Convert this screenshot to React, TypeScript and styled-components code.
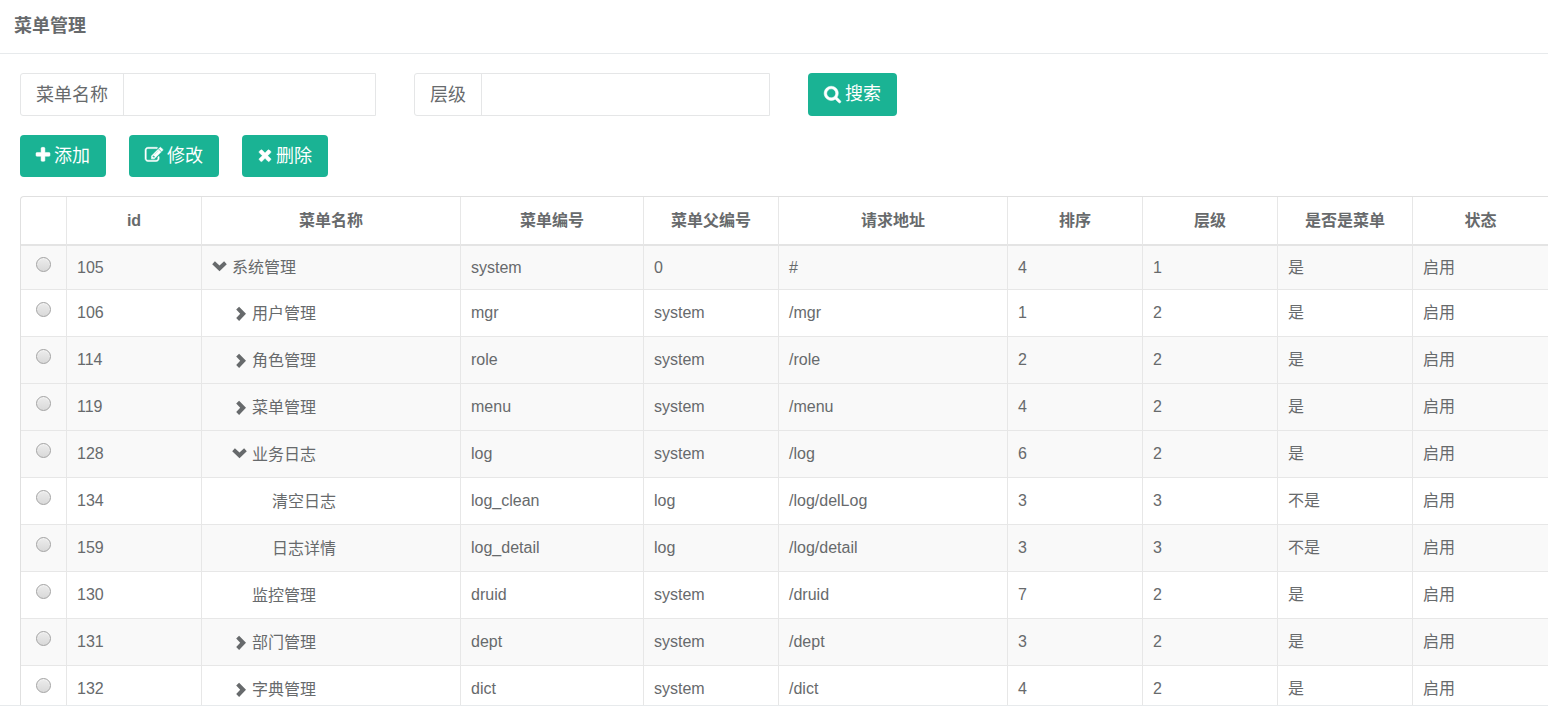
import React, { useState } from 'react';
import styled, { createGlobalStyle } from 'styled-components';

const GlobalStyle = createGlobalStyle`
  *, *::before, *::after { box-sizing: border-box; }
  body {
    margin: 0;
    overflow: hidden;
    background: #fff;
    color: #676a6c;
    font-family: "Liberation Sans", "Noto Sans CJK SC", sans-serif;
    font-size: 16px;
    line-height: 24px;
  }
`;

const Page = styled.div`
  height: 100vh;
  padding-bottom: 3px;
`;

const Panel = styled.main`
  display: flex;
  flex-direction: column;
  height: 100%;
  overflow: hidden;
  border-bottom: 1px solid #e7eaec;
`;

const TitleBar = styled.header`
  flex: none;
  padding: 13px 14px 14px;
  border-bottom: 1px solid #e7eaec;
`;

const Title = styled.h1`
  margin: 0;
  font-size: 18px;
  line-height: 26px;
  font-weight: 700;
`;

const Content = styled.div`
  flex: 1;
  min-height: 0;
  padding: 19px 0 0 20px;
`;

const SearchRow = styled.form`
  display: flex;
  gap: 38px;
  margin-bottom: 19px;
`;

const Field = styled.div`
  display: flex;
  flex: 0 1 356px;
  height: 43px;
  border: 1px solid #e5e6e7;
  border-radius: 3px 0 0 3px;
`;

const FieldLabel = styled.label`
  flex: none;
  padding: 8px 15px 6px;
  border-right: 1px solid #e5e6e7;
  font-size: 18px;
  line-height: 27px;
`;

const FieldInput = styled.input`
  flex: 1;
  min-width: 0;
  padding: 6px 12px;
  border: 0;
  outline: 0;
  background: transparent;
  color: inherit;
  font: inherit;
`;

const ActionRow = styled.div`
  display: flex;
  gap: 23px;
  margin-bottom: 19px;
`;

const Button = styled.button`
  display: flex;
  align-items: center;
  gap: 4px;
  height: 42px;
  padding: 0 16px;
  border: 0;
  border-radius: 4px;
  background: #1ab394;
  color: #fff;
  font-family: inherit;
  font-size: 18px;
  line-height: 27px;
  white-space: nowrap;
`;

const SearchButton = styled(Button)`
  height: 43px;
`;

const ButtonIcon = styled.svg<{ $width: number }>`
  flex: none;
  width: ${(p) => p.$width}px;
  height: 18px;
  margin-bottom: 2px;
  overflow: visible;
  fill: currentColor;
  stroke: currentColor;
  stroke-width: 50;
`;

const TableFrame = styled.div`
  border: solid #e0e0e0;
  border-width: 1px 0 0 1px;
  border-radius: 4px 0 0 0;
  overflow: hidden;
`;

const Table = styled.table`
  width: 100%;
  table-layout: fixed;
  border-collapse: separate;
  border-spacing: 0;
`;

const Col = styled.col<{ $width: number }>`
  width: ${(p) => p.$width}px;
`;

const HeadCell = styled.th`
  height: 49px;
  padding: 0 10px;
  border-bottom: 2px solid #e4e4e4;
  font-weight: 700;
  text-align: center;
  & + & { border-left: 1px solid #e7e7e7; }
`;

const Cell = styled.td`
  padding: 11px 10px 9px;
  border-bottom: 1px solid #e7e7e7;
  vertical-align: top;
  white-space: nowrap;
  & + & { border-left: 1px solid #e7e7e7; }
`;

const RadioCell = styled.td`
  padding: 12px 10px 9px;
  border-bottom: 1px solid #e7e7e7;
  line-height: 0;
  text-align: center;
  vertical-align: top;
  & + ${Cell} { border-left: 1px solid #e7e7e7; }
`;

const Row = styled.tr<{ $shaded: boolean }>`
  background: ${(p) => (p.$shaded ? '#f9f9f9' : '#fff')};

  /* The thick header rule takes one pixel of the first row's padding. */
  &:first-child ${Cell} { padding-top: 10px; }
  &:first-child ${RadioCell} { padding-top: 11px; }
`;

const Radio = styled.input`
  appearance: none;
  width: 15px;
  height: 15px;
  margin: 0;
  border: 1px solid #a3a3a3;
  border-radius: 50%;
  background: linear-gradient(#ececec, #d9d9d9);
  box-shadow: inset 0 1px 1px #f4f4f4;
  &:checked { background: radial-gradient(#555 0 3px, #e0e0e0 4px); }
`;

const NameLine = styled.div<{ $level: number }>`
  display: flex;
  align-items: center;
  gap: 4px;
  padding-left: ${(p) => (p.$level - 1) * 20}px;
  line-height: ${(p) => (p.$level > 1 ? 26 : 24)}px;
`;

const Toggle = styled.button`
  display: flex;
  width: 16px;
  height: 16px;
  padding: 0;
  border: 0;
  background: none;
  color: inherit;
`;

const ToggleSpace = styled.span`
  width: 16px;
`;

const Chevron = styled.svg`
  width: 16px;
  height: 16px;
  fill: currentColor;
`;

const icons = {
  search: {
    width: 17,
    viewBox: '64 0 1664 1792',
    path: 'M1216 832q0-185-131.5-316.5t-316.5-131.5-316.5 131.5-131.5 316.5 131.5 316.5 316.5 131.5 316.5-131.5 131.5-316.5zm512 832q0 52-38 90t-90 38q-54 0-90-38l-343-342q-179 124-399 124-143 0-273.5-55.5t-225-150-150-225-55.5-273.5 55.5-273.5 150-225 225-150 273.5-55.5 273.5 55.5 225 150 150 225 55.5 273.5q0 220-124 399l343 343q37 37 37 90z',
  },
  plus: {
    width: 14,
    viewBox: '192 0 1408 1792',
    path: 'M1600 736v192q0 40-28 68t-68 28h-416v416q0 40-28 68t-68 28h-192q-40 0-68-28t-28-68v-416h-416q-40 0-68-28t-28-68v-192q0-40 28-68t68-28h416v-416q0-40 28-68t68-28h192q40 0 68 28t28 68v416h416q40 0 68 28t28 68z',
  },
  edit: {
    width: 18,
    viewBox: '0 0 1792 1792',
    path: 'M888 1184l116-116-152-152-116 116v56h96v96h56zm440-720q-16-16-33 1l-350 350q-17 17-1 33t33-1l350-350q17-17 1-33zm80 594v190q0 119-84.5 203.5t-203.5 84.5h-832q-119 0-203.5-84.5t-84.5-203.5v-832q0-119 84.5-203.5t203.5-84.5h832q63 0 117 25 15 7 18 23 3 17-9 29l-49 49q-14 14-32 8-23-6-45-6h-832q-66 0-113 47t-47 113v832q0 66 47 113t113 47h832q66 0 113-47t47-113v-126q0-13 9-22l64-64q15-15 35-7t20 29zm-96-738l288 288-672 672h-288v-288zm444 132l-92 92-288-288 92-92q28-28 68-28t68 28l152 152q28 28 28 68t-28 68z',
  },
  remove: {
    width: 14,
    viewBox: '192 0 1408 1792',
    path: 'M1490 1322q0 40-28 68l-136 136q-28 28-68 28t-68-28l-294-294-294 294q-28 28-68 28t-68-28l-136-136q-28-28-28-68t28-68l294-294-294-294q-28-28-28-68t28-68l136-136q28-28 68-28t68 28l294 294 294-294q28-28 68-28t68 28l136 136q28 28 28 68t-28 68l-294 294 294 294q28 28 28 68z',
  },
};

const Icon = ({ name }: { name: keyof typeof icons }) => (
  <ButtonIcon $width={icons[name].width} viewBox={icons[name].viewBox} aria-hidden="true">
    <path d={icons[name].path} />
  </ButtonIcon>
);

const columns = [
  { title: '', width: 45 },
  { title: 'id', width: 135 },
  { title: '菜单名称', width: 259 },
  { title: '菜单编号', width: 183 },
  { title: '菜单父编号', width: 135 },
  { title: '请求地址', width: 229 },
  { title: '排序', width: 135 },
  { title: '层级', width: 135 },
  { title: '是否是菜单', width: 135 },
  { title: '状态', width: 136 },
];

type Menu = {
  id: number;
  name: string;
  code: string;
  parent: string;
  url: string;
  sort: number;
  level: number;
  isMenu: string;
  state?: 'open' | 'closed';
  shaded: boolean;
};

const menus: Menu[] = [
  { id: 105, name: '系统管理', code: 'system', parent: '0', url: '#', sort: 4, level: 1, isMenu: '是', state: 'open', shaded: true },
  { id: 106, name: '用户管理', code: 'mgr', parent: 'system', url: '/mgr', sort: 1, level: 2, isMenu: '是', state: 'closed', shaded: false },
  { id: 114, name: '角色管理', code: 'role', parent: 'system', url: '/role', sort: 2, level: 2, isMenu: '是', state: 'closed', shaded: true },
  { id: 119, name: '菜单管理', code: 'menu', parent: 'system', url: '/menu', sort: 4, level: 2, isMenu: '是', state: 'closed', shaded: true },
  { id: 128, name: '业务日志', code: 'log', parent: 'system', url: '/log', sort: 6, level: 2, isMenu: '是', state: 'open', shaded: true },
  { id: 134, name: '清空日志', code: 'log_clean', parent: 'log', url: '/log/delLog', sort: 3, level: 3, isMenu: '不是', shaded: false },
  { id: 159, name: '日志详情', code: 'log_detail', parent: 'log', url: '/log/detail', sort: 3, level: 3, isMenu: '不是', shaded: true },
  { id: 130, name: '监控管理', code: 'druid', parent: 'system', url: '/druid', sort: 7, level: 2, isMenu: '是', shaded: false },
  { id: 131, name: '部门管理', code: 'dept', parent: 'system', url: '/dept', sort: 3, level: 2, isMenu: '是', state: 'closed', shaded: true },
  { id: 132, name: '字典管理', code: 'dict', parent: 'system', url: '/dict', sort: 4, level: 2, isMenu: '是', state: 'closed', shaded: false },
];

const MenuName = ({ menu }: { menu: Menu }) => (
  <NameLine $level={menu.level}>
    {menu.state ? (
      <Toggle type="button" aria-label={menu.name} aria-expanded={menu.state === 'open'}>
        <Chevron viewBox="0 0 16 16" aria-hidden="true">
          <path
            d={
              menu.state === 'open'
                ? 'M.2 4.2 2.9 1.3 7.5 5.6 12.1 1.3 14.8 4.2 7.5 11.2Z'
                : 'M4.2 3.6 7.1.8 14 7.8 7.1 14.9 4.2 12.1 8.2 7.8Z'
            }
          />
        </Chevron>
      </Toggle>
    ) : (
      <ToggleSpace />
    )}
    {menu.name}
  </NameLine>
);

export default function App() {
  const [selected, setSelected] = useState<number | null>(null);

  return (
    <Page>
      <GlobalStyle />
      <Panel>
        <TitleBar>
          <Title>菜单管理</Title>
        </TitleBar>
        <Content>
          <SearchRow onSubmit={(e) => e.preventDefault()}>
            <Field>
              <FieldLabel htmlFor="menuName">菜单名称</FieldLabel>
              <FieldInput id="menuName" type="text" />
            </Field>
            <Field>
              <FieldLabel htmlFor="level">层级</FieldLabel>
              <FieldInput id="level" type="text" />
            </Field>
            <SearchButton type="submit">
              <Icon name="search" />
              搜索
            </SearchButton>
          </SearchRow>
          <ActionRow>
            <Button type="button">
              <Icon name="plus" />
              添加
            </Button>
            <Button type="button">
              <Icon name="edit" />
              修改
            </Button>
            <Button type="button">
              <Icon name="remove" />
              删除
            </Button>
          </ActionRow>
          <TableFrame>
            <Table>
              <colgroup>
                {columns.map((c, i) => (
                  <Col key={i} $width={c.width} />
                ))}
              </colgroup>
              <thead>
                <tr>
                  {columns.map((c, i) => (
                    <HeadCell key={i} scope="col">
                      {c.title}
                    </HeadCell>
                  ))}
                </tr>
              </thead>
              <tbody>
                {menus.map((m) => (
                  <Row key={m.id} $shaded={m.shaded}>
                    <RadioCell>
                      <Radio
                        type="radio"
                        name="menu"
                        aria-label={m.name}
                        checked={selected === m.id}
                        onChange={() => setSelected(m.id)}
                      />
                    </RadioCell>
                    <Cell>{m.id}</Cell>
                    <Cell>
                      <MenuName menu={m} />
                    </Cell>
                    <Cell>{m.code}</Cell>
                    <Cell>{m.parent}</Cell>
                    <Cell>{m.url}</Cell>
                    <Cell>{m.sort}</Cell>
                    <Cell>{m.level}</Cell>
                    <Cell>{m.isMenu}</Cell>
                    <Cell>启用</Cell>
                  </Row>
                ))}
              </tbody>
            </Table>
          </TableFrame>
        </Content>
      </Panel>
    </Page>
  );
}
